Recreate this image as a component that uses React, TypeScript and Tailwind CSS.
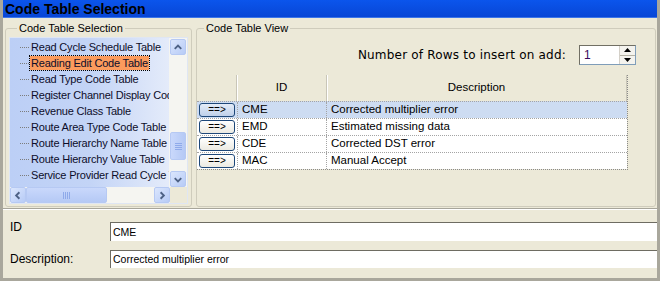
import React from 'react';

const items = [
  'Read Cycle Schedule Table',
  'Reading Edit Code Table',
  'Read Type Code Table',
  'Register Channel Display Code Table',
  'Revenue Class Table',
  'Route Area Type Code Table',
  'Route Hierarchy Name Table',
  'Route Hierarchy Value Table',
  'Service Provider Read Cycle Table',
  'Source Table',
];

const rows = [
  { id: 'CME', desc: 'Corrected multiplier error' },
  { id: 'EMD', desc: 'Estimated missing data' },
  { id: 'CDE', desc: 'Corrected DST error' },
  { id: 'MAC', desc: 'Manual Accept' },
];

const ScrollButton: React.FC<{ dir: 'up' | 'down' | 'left' | 'right' }> = ({ dir }) => {
  const paths = {
    up: 'M4 9 L7.5 5.5 L11 9',
    down: 'M4 6 L7.5 9.5 L11 6',
    left: 'M9 4 L5.5 7.5 L9 11',
    right: 'M6 4 L9.5 7.5 L6 11',
  };
  return (
    <div className="w-[16px] h-[16px] shrink-0 rounded-[2px] border border-[#b6c9f3] bg-gradient-to-br from-[#dbe6fd] to-[#b7cbf6] flex items-center justify-center">
      <svg width="15" height="15" viewBox="0 0 15 15">
        <path d={paths[dir]} fill="none" stroke="#4d6185" strokeWidth="2" />
      </svg>
    </div>
  );
};

const Grip: React.FC<{ vertical?: boolean }> = ({ vertical }) => (
  <div className={vertical ? 'flex flex-col gap-[1px]' : 'flex gap-[1px]'}>
    {[0, 1, 2, 3].map((i) => (
      <span key={i} className={vertical ? 'block w-[7px] h-[1px] bg-[#8faaea]' : 'block w-[1px] h-[7px] bg-[#8faaea]'} />
    ))}
  </div>
);

const TableList: React.FC = () => (
  <div className="flex flex-col w-[179px] h-[167px] border border-[#dfe6f3] text-[11px] tracking-[-0.2px]">
    <div className="flex flex-1 min-h-0">
      <div className="flex-1 overflow-hidden bg-gradient-to-r from-[#bccff6] via-[#c3d4f6] to-[#e4ebfa] pt-[1px]">
        {items.map((t, i) => (
          <div key={t} className="flex items-center h-[16px] pl-[10px] whitespace-nowrap text-[#0d0d2a]">
            <span className="w-[9px] border-t border-dotted border-[#7d7d7d] mr-[1px] shrink-0" />
            <span
              className={
                i === 1
                  ? 'px-[1px] bg-[#fb9b5d] outline outline-1 outline-dotted outline-black leading-[14px]'
                  : 'px-[1px] leading-[14px]'
              }
            >
              {i === 9 ? '\u2713 Source Table' : t}
            </span>
          </div>
        ))}
      </div>
      <div className="w-[18px] flex flex-col bg-[#f5f5f1] pt-[1px] pl-[1px]">
        <ScrollButton dir="up" />
        <div className="flex-1">
          <div className="mt-[77px] h-[28px] w-[16px] rounded-[2px] border border-[#b6c9f3] bg-gradient-to-r from-[#c9d8fb] to-[#b5c9f5] flex items-center justify-center">
            <Grip vertical />
          </div>
        </div>
        <ScrollButton dir="down" />
      </div>
    </div>
    <div className="flex h-[16px]">
      <div className="w-[160px] flex bg-[#f5f5f1]">
        <ScrollButton dir="left" />
        <div className="w-[81px] h-[16px] rounded-[2px] border border-[#b6c9f3] bg-gradient-to-b from-[#c9d8fb] to-[#b5c9f5] flex items-center justify-center">
          <Grip />
        </div>
        <div className="flex-1" />
        <ScrollButton dir="right" />
      </div>
      <div className="flex-1 bg-[#ece9d8]" />
    </div>
  </div>
);

const GridButton: React.FC<{ active?: boolean }> = ({ active }) => (
  <div
    className={
      'w-[36px] h-[14px] rounded-[3px] border border-[#1d4779] flex items-center justify-center text-[10px] leading-none ' +
      (active ? 'bg-gradient-to-b from-[#e4ecf8] to-[#bfd0ea]' : 'bg-gradient-to-b from-white to-[#eceae2]')
    }
  >
    ==&gt;
  </div>
);

const CodeGrid: React.FC = () => (
  <div className="w-[431px] border-r border-b border-dotted border-[#8a8a8a] text-[11.5px]">
    <div className="flex h-[26px] items-center">
      <div className="w-[40px] h-full border-r border-[#c9c6b8] shadow-[1px_0_0_white]" />
      <div className="w-[90px] h-full flex items-center justify-center border-r border-[#c9c6b8] shadow-[1px_0_0_white]">ID</div>
      <div className="flex-1 h-full flex items-center justify-center border-r border-[#c9c6b8]">Description</div>
    </div>
    {rows.map((r, i) => (
      <div
        key={r.id}
        className={'flex h-[17px] items-center border-t border-dotted border-[#a4a4a4] ' + (i === 0 ? 'bg-[#cddcf2]' : 'bg-white')}
      >
        <div className="w-[40px] h-full flex items-center pl-[2px]">
          <GridButton active={i === 0} />
        </div>
        <div className="w-[90px] h-full flex items-center pl-[4px] border-l border-r border-dotted border-[#a4a4a4]">{r.id}</div>
        <div className="flex-1 h-full flex items-center pl-[4px]">{r.desc}</div>
      </div>
    ))}
  </div>
);

export default function App() {
  return (
    <div className="w-[660px] h-[281px] overflow-hidden flex flex-col bg-[#ece9d8] border-l-[3px] border-r-[3px] border-b-[3px] border-[#a9a79c] font-['Liberation_Sans',Arial,sans-serif] text-[12px] text-black">
      <div className="h-[18px] shrink-0 bg-gradient-to-b from-[#0b55ec] to-[#0846d6] border-b border-[#3c76ea] pl-[2px] flex items-center">
        <span className="text-[14px] font-bold leading-none text-black">Code Table Selection</span>
      </div>

      <div className="h-[191px] shrink-0 flex gap-[4px] pl-[2px] pt-[3px] border-b border-[#a7a59a]">
        <fieldset className="w-[187px] h-[186px] border border-[#cfccbc] rounded-[3px] pl-[3px] pt-[2px] pb-0 m-0 min-w-0">
          <legend className="ml-[8px] px-[2px] text-[11px] leading-[14px]">Code Table Selection</legend>
          <TableList />
        </fieldset>

        <fieldset className="w-[460px] h-[186px] border border-[#cfccbc] rounded-[3px] p-0 m-0 min-w-0">
          <legend className="ml-[7px] px-[2px] text-[11px] leading-[14px]">Code Table View</legend>
          <div className="flex items-center justify-end pr-[19px] mt-[10px] h-[20px]">
            <span className="mr-[13px] text-[12px] tracking-[0.2px] leading-none font-['DejaVu_Sans',sans-serif]">Number of Rows to insert on add:</span>
            <div className="w-[57px] h-[20px] flex bg-white border border-[#7f9db9] border-t-[#716f64] border-l-[#716f64]">
              <span className="flex-1 pl-[4px] leading-[18px] text-[#3a0a5a]">1</span>
              <div className="w-[16px] flex flex-col border-l border-[#d4d0c8]">
                <div className="flex-1 flex items-center justify-center bg-[#f4f3ee] border-b border-[#b5b2a5]">
                  <svg width="7" height="4" viewBox="0 0 7 4"><path d="M0 4 L3.5 0 L7 4 Z" fill="#000" /></svg>
                </div>
                <div className="flex-1 flex items-center justify-center bg-[#f4f3ee]">
                  <svg width="7" height="4" viewBox="0 0 7 4"><path d="M0 0 L3.5 4 L7 0 Z" fill="#000" /></svg>
                </div>
              </div>
            </div>
          </div>
          <div className="mt-[10px]">
            <CodeGrid />
          </div>
        </fieldset>
      </div>

      <div className="flex-1 flex flex-col pt-[12px] gap-[9px] border-t border-white">
        <div className="flex items-start h-[19px]">
          <span className="w-[107px] pl-[7px] shrink-0 leading-[12px] -mt-[1px]">ID</span>
          <div className="flex-1 h-[19px] bg-white border-t border-l border-[#6e6c62] pl-[2px] text-[10.5px] leading-[18px]">CME</div>
        </div>
        <div className="flex items-center h-[18px]">
          <span className="w-[107px] pl-[7px] shrink-0">Description:</span>
          <div className="flex-1 h-[18px] bg-white border-t border-l border-[#6e6c62] pl-[2px] text-[10.5px] leading-[17px]">Corrected multiplier error</div>
        </div>
      </div>
    </div>
  );
}
